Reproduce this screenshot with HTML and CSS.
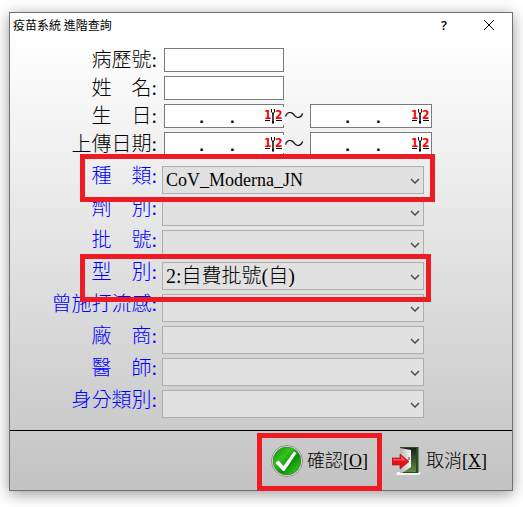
FILE: index.html
```html
<!DOCTYPE html>
<html lang="zh-Hant">
<head>
  <meta charset="UTF-8" />
  <meta name="viewport" content="width=device-width, initial-scale=1.0" />
  <title>疫苗系統 進階查詢</title>
  <link rel="stylesheet" href="styles.css">
</head>
<body>

  <svg class="defs" aria-hidden="true">
    <symbol id="icon-date" viewBox="0 0 20 18">
      <text class="digit" x="0" y="12">1</text>
      <text class="digit" x="11" y="12">2</text>
      <path d="M1 13.500h5M12 13.500h6" stroke="#000" />
      <path d="M9 6v10.500" stroke="#000" stroke-width="2" />
      <path d="M7.500 2v3l1.500 1.500 1.500-1.500v-3" fill="none" stroke="#000" />
      <path d="M9 7v7" stroke="#aaa" stroke-width=".8" />
    </symbol>
    <symbol id="icon-chevron" viewBox="0 0 10 6">
      <path d="M1 1l4 4 4-4" fill="none" stroke="#444" stroke-width="1.3" />
    </symbol>
  </svg>

  <form class="window">
    <header class="titlebar">
      <h1>疫苗系統 進階查詢</h1>
      <button type="button" class="help" aria-label="說明">?</button>
      <button type="button" class="close" aria-label="關閉">
        <svg width="10" height="10" viewBox="0 0 10 10"><path d="M0 0l10 10M10 0L0 10" stroke="#000" /></svg>
      </button>
    </header>

    <!-- Text and date fields -->
    <div class="fields">
      <div class="row">
        <label for="chart">病歷號:</label>
        <input type="text" id="chart">
      </div>
      <div class="row">
        <label for="name">姓　名:</label>
        <input type="text" id="name">
      </div>
      <div class="row">
        <label for="birth-from">生　日:</label>
        <div class="date">
          <input type="text" id="birth-from" value="   .  .">
          <button type="button" class="pick flush" aria-label="選擇日期"><svg width="20" height="18"><use href="#icon-date" /></svg></button>
        </div>
        <span class="tilde">～</span>
        <div class="date">
          <input type="text" aria-label="生日迄" value="   .  .">
          <button type="button" class="pick" aria-label="選擇日期"><svg width="20" height="18"><use href="#icon-date" /></svg></button>
        </div>
      </div>
      <div class="row">
        <label for="upload-from">上傳日期:</label>
        <div class="date">
          <input type="text" id="upload-from" value="   .  .">
          <button type="button" class="pick flush" aria-label="選擇日期"><svg width="20" height="18"><use href="#icon-date" /></svg></button>
        </div>
        <span class="tilde">～</span>
        <div class="date">
          <input type="text" aria-label="上傳日期迄" value="   .  .">
          <button type="button" class="pick" aria-label="選擇日期"><svg width="20" height="18"><use href="#icon-date" /></svg></button>
        </div>
      </div>
    </div>

    <!-- Drop-downs -->
    <div class="combos">
      <div class="row marked wide">
        <label for="kind">種　類:</label>
        <div class="combo">
          <select id="kind" class="latin"><option>CoV_Moderna_JN</option></select>
          <svg class="chevron"><use href="#icon-chevron" /></svg>
        </div>
      </div>
      <div class="row">
        <label for="dose">劑　別:</label>
        <div class="combo">
          <select id="dose"><option></option></select>
          <svg class="chevron"><use href="#icon-chevron" /></svg>
        </div>
      </div>
      <div class="row">
        <label for="batch">批　號:</label>
        <div class="combo">
          <select id="batch"><option></option></select>
          <svg class="chevron"><use href="#icon-chevron" /></svg>
        </div>
      </div>
      <div class="row marked">
        <label for="type">型　別:</label>
        <div class="combo">
          <select id="type"><option>2:自費批號(自)</option></select>
          <svg class="chevron"><use href="#icon-chevron" /></svg>
        </div>
      </div>
      <div class="row">
        <label for="flu">曾施打流感:</label>
        <div class="combo">
          <select id="flu"><option></option></select>
          <svg class="chevron"><use href="#icon-chevron" /></svg>
        </div>
      </div>
      <div class="row">
        <label for="vendor">廠　商:</label>
        <div class="combo">
          <select id="vendor"><option></option></select>
          <svg class="chevron"><use href="#icon-chevron" /></svg>
        </div>
      </div>
      <div class="row">
        <label for="doctor">醫　師:</label>
        <div class="combo">
          <select id="doctor"><option></option></select>
          <svg class="chevron"><use href="#icon-chevron" /></svg>
        </div>
      </div>
      <div class="row">
        <label for="identity">身分類別:</label>
        <div class="combo">
          <select id="identity"><option></option></select>
          <svg class="chevron"><use href="#icon-chevron" /></svg>
        </div>
      </div>
    </div>

    <!-- Buttons -->
    <footer class="actions">
      <button type="button" class="action ok">
        <svg width="32" height="32" viewBox="0 0 32 32">
          <defs>
            <linearGradient id="green" x1="0" y1="0" x2="1" y2="1">
              <stop offset="0" stop-color="#0a8a08" />
              <stop offset=".35" stop-color="#35c41c" />
              <stop offset=".6" stop-color="#0a9008" />
              <stop offset="1" stop-color="#4be02a" />
            </linearGradient>
          </defs>
          <circle cx="16" cy="16" r="15.500" fill="#f4f4f4" stroke="#777" stroke-width=".8" />
          <circle cx="16" cy="16" r="14" fill="url(#green)" stroke="#4a6a4a" stroke-width=".6" />
          <path d="M4.500 18l3-2.500 5 5.500L23 6.500l2.500 1.500L13.500 26h-1.500z" fill="#fff" />
        </svg>
        <span>確認[<u>O</u>]</span>
      </button>
      <button type="button" class="action">
        <svg width="30" height="30" viewBox="0 0 30 30">
          <defs>
            <linearGradient id="door" x1="0" y1="0" x2="0" y2="1">
              <stop offset="0" stop-color="#182018" />
              <stop offset="1" stop-color="#5d8f42" />
            </linearGradient>
            <linearGradient id="panel" x1="0" y1="0" x2="1" y2="0">
              <stop offset="0" stop-color="#b4b8b4" />
              <stop offset="1" stop-color="#f6f6f6" />
            </linearGradient>
          </defs>
          <path d="M5 26h23l1 2-3 1H4z" fill="#f4f4f4" />
          <path d="M8 1h18.500v26H8z" fill="#2d4a25" />
          <path d="M9 2h15v24H9z" fill="url(#door)" />
          <path d="M8 2l11 2v17l-9 6H8z" fill="url(#panel)" />
          <path d="M17 11v3" stroke="#444" />
          <path d="M0 12h8V8l9 7.500L8 23v-4H0z" fill="#e0141a" stroke="#a40d10" stroke-width=".6" />
          <path d="M1 13h8v-3l5 4.500H1z" fill="#ff5a56" />
        </svg>
        <span>取消[<u>X</u>]</span>
      </button>
    </footer>
  </form>

</body>
</html>
```
FILE: styles.css
```css
*, *::after {
  box-sizing: border-box;
}

body {
  margin: 0;
  padding: 12px 10px 16px 9px;
  background: #fff;
  color: #000;
  font-family: "Liberation Serif", "Noto Sans CJK TC", serif;
  font-size: 20px;
  font-weight: 300;
}

input, select, button {
  font: inherit;
  color: inherit;
  margin: 0;
  padding: 0;
  border-radius: 0;
}

button {
  border: none;
  background: none;
}

.defs {
  display: none;
}

.window {
  border: 1px solid #707070;
  background: linear-gradient(#fff 24px, #c3c3c3);
  box-shadow: 0 3px 14px rgba(0, 0, 0, 0.4);
}

/* Title bar */
.titlebar {
  display: flex;
  align-items: center;
  height: 23px;
  padding: 0 18px 0 3px;
}

.titlebar h1 {
  flex: 1;
  margin: 0;
  font-family: "Noto Sans CJK TC", sans-serif;
  font-size: 12px;
  font-weight: 400;
  line-height: 16px;
}

.help {
  width: 10px;
  margin-right: 35px;
  font-family: "Open Sans", sans-serif;
  font-size: 13px;
  font-weight: 600;
  line-height: 16px;
}

.close {
  display: flex;
}

/* Rows */
.fields {
  display: flex;
  flex-direction: column;
  gap: 4px;
  padding-top: 12px;
}

.combos {
  display: flex;
  flex-direction: column;
  gap: 4px;
  padding: 10px 0 12px;
}

.row {
  display: flex;
  position: relative;
}

.row label {
  width: 152px;
  padding-right: 5px;
  line-height: 24px;
  text-align: right;
  white-space: nowrap;
}

.fields label {
  width: 154px;
  padding-right: 7px;
}

.combos label {
  color: #00f;
  line-height: 20px;
}

.fields input {
  display: block;
  width: 120px;
  height: 24px;
  padding: 0 1px;
  border: 1px solid #7a7a7a;
  background: #fff;
}

.date {
  position: relative;
}

.fields .date input {
  padding-top: 4px;
  font-family: "Liberation Mono", monospace;
  font-size: 17px;
  font-weight: 700;
}

.fields .tilde + .date input {
  width: 122px;
}

.pick {
  position: absolute;
  top: 3px;
  right: 1px;
  display: flex;
  background: #fff;
}

.pick.flush {
  right: 0;
}

.digit {
  fill: #f00;
  font-family: "DejaVu Sans Condensed", "DejaVu Sans", sans-serif;
  font-size: 12px;
  font-weight: 700;
}

.tilde {
  width: 26px;
  line-height: 24px;
}

.combo {
  position: relative;
  width: 262px;
}

.combo select {
  display: block;
  appearance: none;
  width: 100%;
  height: 28px;
  padding: 0 20px 0 3px;
  border: 1px solid #adadad;
  background: #e1e1e1;
}

.combo .latin {
  font-size: 18px;
}

.chevron {
  position: absolute;
  top: 12px;
  right: 4px;
  width: 10px;
  height: 6px;
  pointer-events: none;
}

/* Red frames */
.marked::after,
.ok::after {
  content: "";
  position: absolute;
  z-index: 1;
  border: 5px solid #ed1c24;
  pointer-events: none;
}

.marked::after {
  top: -8px;
  left: 70px;
  width: 351px;
  height: 48px;
}

.marked.wide::after {
  top: -12px;
  width: 355px;
}

/* Footer */
.actions {
  display: flex;
  justify-content: flex-end;
  gap: 24px;
  padding: 14px 25px 13px 0;
  border-top: 1px solid #000;
}

.action {
  position: relative;
  display: flex;
  align-items: center;
  gap: 4px;
  font-size: 18px;
  line-height: 32px;
}

.ok::after {
  top: -12px;
  bottom: -14px;
  left: -14px;
  right: -14px;
}
```
